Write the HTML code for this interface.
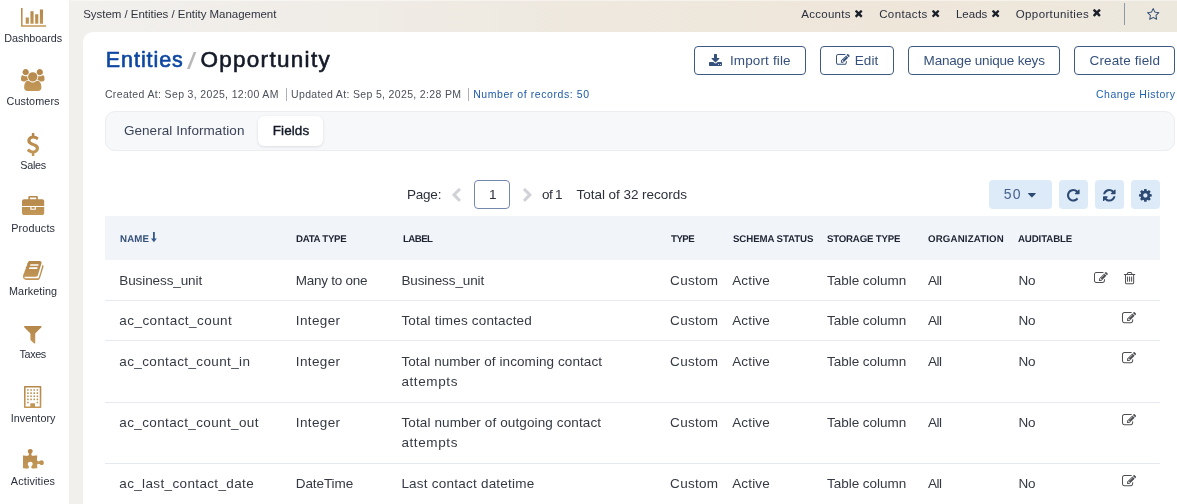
<!DOCTYPE html>
<html lang="en"><head><meta charset="utf-8"><title>Entities / Opportunity</title>
<style>
*{box-sizing:border-box;margin:0;padding:0}
html,body{width:1177px;height:504px;overflow:hidden;background:#f2f0ed}
#root{position:absolute;left:0;top:0;width:1177px;height:504px;overflow:hidden;will-change:transform;font-family:"Liberation Sans",sans-serif;color:#2a2f3d;
 background:linear-gradient(90deg,#f2f0ed 0px,#f2f0ed 83px,#f0ede8 300px,#eee8de 600px,#efe6da 900px,#ece8de 1177px)}
.t{position:absolute;white-space:nowrap;display:block}
.ic{position:absolute;display:block;overflow:visible}
#sidebar{position:absolute;left:0;top:0;width:69px;height:504px;background:#fff}
#card{position:absolute;left:83px;top:32px;width:1110px;height:500px;background:#fff;border-radius:10px 0 0 0}
#tdiv{position:absolute;left:1124px;top:3px;width:1px;height:22px;background:#8d97ab}
.btn{position:absolute;top:46px;height:29px;border:1px solid #3f5982;border-radius:4px;background:#fff}
.sep{position:absolute;top:88px;width:1px;height:13px;background:#adb1b8}
#hl{position:absolute;left:71px;top:0;width:1106px;height:1px;background:rgba(255,255,255,.45)}
#tabs{position:absolute;left:105px;top:111px;width:1070px;height:40px;background:#f7f8fa;border:1px solid #ebedf1;border-radius:10px}
#pill{position:absolute;left:258px;top:116px;width:65px;height:29.5px;background:#fff;border-radius:6px;box-shadow:0 1px 3px rgba(20,30,60,.12)}
#pbox{position:absolute;left:474px;top:180px;width:36px;height:28.5px;border:1px solid #7687ae;border-radius:4px;background:#fff}
.tb{position:absolute;top:180px;height:29px;background:#ddeaf8;border-radius:4px}
#thead{position:absolute;left:105px;top:216px;width:1055px;height:44px;background:#f1f4f9}
.ln{position:absolute;left:105px;width:1055px;height:1px;background:#e7e9f1}
</style></head><body>
<div id="root">
<svg width="0" height="0" style="position:absolute"><defs><linearGradient id="gold" x1="0" y1="0" x2="0" y2="1"><stop offset="0" stop-color="#c39857"/><stop offset="1" stop-color="#b4864a"/></linearGradient></defs></svg>
<nav id="nav">
<div id="sidebar"></div>
<span class="t" id="sl0" style="left:4.31px;top:31.00px;font-size:10.8px;line-height:14px;color:#2a2f3d;letter-spacing:-0.039px;">Dashboards</span>
<span class="t" id="sl1" style="left:6.51px;top:94.00px;font-size:10.8px;line-height:14px;color:#2a2f3d;letter-spacing:0.096px;">Customers</span>
<span class="t" id="sl2" style="left:20.26px;top:158.00px;font-size:10.8px;line-height:14px;color:#2a2f3d;letter-spacing:-0.261px;">Sales</span>
<span class="t" id="sl3" style="left:11.26px;top:221.00px;font-size:10.8px;line-height:14px;color:#2a2f3d;letter-spacing:0.159px;">Products</span>
<span class="t" id="sl4" style="left:9.01px;top:284.00px;font-size:10.8px;line-height:14px;color:#2a2f3d;letter-spacing:0.071px;">Marketing</span>
<span class="t" id="sl5" style="left:19.51px;top:347.00px;font-size:10.8px;line-height:14px;color:#2a2f3d;letter-spacing:-0.374px;">Taxes</span>
<span class="t" id="sl6" style="left:10.76px;top:411.00px;font-size:10.8px;line-height:14px;color:#2a2f3d;letter-spacing:0.038px;">Inventory</span>
<span class="t" id="sl7" style="left:10.76px;top:474.00px;font-size:10.8px;line-height:14px;color:#2a2f3d;letter-spacing:0.179px;">Activities</span>
<svg class="ic" style="left:20.92px;top:7.61px" width="25.17" height="18.88" viewBox="0.0 -1408.0 2048.0 1536.0"><path fill="url(#gold)" transform="scale(1,-1)" d="M640 640v-512h-256v512h256zM1024 1152v-1024h-256v1024h256zM2048 0v-128h-2048v1536h128v-1408h1920zM1408 896v-768h-256v768h256zM1792 1280v-1152h-256v1152h256z"/></svg>
<svg class="ic" style="left:21.36px;top:68.65px" width="23.53" height="21.96" viewBox="0.0 -1536.0 1920.0 1792.0"><path fill="url(#gold)" transform="scale(1,-1)" d="M593 640q-162 -5 -265 -128h-134q-82 0 -138 40.5t-56 118.5q0 353 124 353q6 0 43.5 -21t97.5 -42.5t119 -21.5q67 0 133 23q-5 -37 -5 -66q0 -139 81 -256zM1664 3q0 -120 -73 -189.5t-194 -69.5h-874q-121 0 -194 69.5t-73 189.5q0 53 3.5 103.5t14 109t26.5 108.5 t43 97.5t62 81t85.5 53.5t111.5 20q10 0 43 -21.5t73 -48t107 -48t135 -21.5t135 21.5t107 48t73 48t43 21.5q61 0 111.5 -20t85.5 -53.5t62 -81t43 -97.5t26.5 -108.5t14 -109t3.5 -103.5zM640 1280q0 -106 -75 -181t-181 -75t-181 75t-75 181t75 181t181 75t181 -75 t75 -181zM1344 896q0 -159 -112.5 -271.5t-271.5 -112.5t-271.5 112.5t-112.5 271.5t112.5 271.5t271.5 112.5t271.5 -112.5t112.5 -271.5zM1920 671q0 -78 -56 -118.5t-138 -40.5h-134q-103 123 -265 128q81 117 81 256q0 29 -5 66q66 -23 133 -23q59 0 119 21.5t97.5 42.5 t43.5 21q124 0 124 -353zM1792 1280q0 -106 -75 -181t-181 -75t-181 75t-75 181t75 181t181 75t181 -75t75 -181z"/></svg>
<svg class="ic" style="left:27.26px;top:133.00px" width="11.98" height="23.00" viewBox="45.0 -1536.0 933.0 1792.0"><path fill="url(#gold)" transform="scale(1,-1)" d="M978 351q0 -153 -99.5 -263.5t-258.5 -136.5v-175q0 -14 -9 -23t-23 -9h-135q-13 0 -22.5 9.5t-9.5 22.5v175q-66 9 -127.5 31t-101.5 44.5t-74 48t-46.5 37.5t-17.5 18q-17 21 -2 41l103 135q7 10 23 12q15 2 24 -9l2 -2q113 -99 243 -125q37 -8 74 -8q81 0 142.5 43 t61.5 122q0 28 -15 53t-33.5 42t-58.5 37.5t-66 32t-80 32.5q-39 16 -61.5 25t-61.5 26.5t-62.5 31t-56.5 35.5t-53.5 42.5t-43.5 49t-35.5 58t-21 66.5t-8.5 78q0 138 98 242t255 134v180q0 13 9.5 22.5t22.5 9.5h135q14 0 23 -9t9 -23v-176q57 -6 110.5 -23t87 -33.5 t63.5 -37.5t39 -29t15 -14q17 -18 5 -38l-81 -146q-8 -15 -23 -16q-14 -3 -27 7q-3 3 -14.5 12t-39 26.5t-58.5 32t-74.5 26t-85.5 11.5q-95 0 -155 -43t-60 -111q0 -26 8.5 -48t29.5 -41.5t39.5 -33t56 -31t60.5 -27t70 -27.5q53 -20 81 -31.5t76 -35t75.5 -42.5t62 -50 t53 -63.5t31.5 -76.5t13 -94z"/></svg>
<svg class="ic" style="left:22.16px;top:195.87px" width="22.19" height="19.02" viewBox="0.0 -1536.0 1792.0 1536.0"><path fill="url(#gold)" transform="scale(1,-1)" d="M640 1280h512v128h-512v-128zM1792 640v-480q0 -66 -47 -113t-113 -47h-1472q-66 0 -113 47t-47 113v480h672v-160q0 -26 19 -45t45 -19h320q26 0 45 19t19 45v160h672zM1024 640v-128h-256v128h256zM1792 1120v-384h-1792v384q0 66 47 113t113 47h352v160q0 40 28 68 t68 28h576q40 0 68 -28t28 -68v-160h352q66 0 113 -47t47 -113z"/></svg>
<svg class="ic" style="left:23.11px;top:260.65px" width="20.54" height="18.94" viewBox="-0.5 -1408.0 1665.3 1536.0"><path fill="url(#gold)" transform="scale(1,-1)" d="M1639 1058q40 -57 18 -129l-275 -906q-19 -64 -76.5 -107.5t-122.5 -43.5h-923q-77 0 -148.5 53.5t-99.5 131.5q-24 67 -2 127q0 4 3 27t4 37q1 8 -3 21.5t-3 19.5q2 11 8 21t16.5 23.5t16.5 23.5q23 38 45 91.5t30 91.5q3 10 0.5 30t-0.5 28q3 11 17 28t17 23 q21 36 42 92t25 90q1 9 -2.5 32t0.5 28q4 13 22 30.5t22 22.5q19 26 42.5 84.5t27.5 96.5q1 8 -3 25.5t-2 26.5q2 8 9 18t18 23t17 21q8 12 16.5 30.5t15 35t16 36t19.5 32t26.5 23.5t36 11.5t47.5 -5.5l-1 -3q38 9 51 9h761q74 0 114 -56t18 -130l-274 -906 q-36 -119 -71.5 -153.5t-128.5 -34.5h-869q-27 0 -38 -15q-11 -16 -1 -43q24 -70 144 -70h923q29 0 56 15.5t35 41.5l300 987q7 22 5 57q38 -15 59 -43zM575 1056q-4 -13 2 -22.5t20 -9.5h608q13 0 25.5 9.5t16.5 22.5l21 64q4 13 -2 22.5t-20 9.5h-608q-13 0 -25.5 -9.5 t-16.5 -22.5zM492 800q-4 -13 2 -22.5t20 -9.5h608q13 0 25.5 9.5t16.5 22.5l21 64q4 13 -2 22.5t-20 9.5h-608q-13 0 -25.5 -9.5t-16.5 -22.5z"/></svg>
<svg class="ic" style="left:24.31px;top:325.69px" width="17.64" height="17.61" viewBox="-1.0 -1280.0 1410.0 1408.0"><path fill="url(#gold)" transform="scale(1,-1)" d="M1403 1241q17 -41 -14 -70l-493 -493v-742q0 -42 -39 -59q-13 -5 -25 -5q-27 0 -45 19l-256 256q-19 19 -19 45v486l-493 493q-31 29 -14 70q17 39 59 39h1280q42 0 59 -39z"/></svg>
<svg class="ic" style="left:24.46px;top:385.73px" width="17.32" height="22.05" viewBox="0.0 -1536.0 1408.0 1792.0"><path fill="url(#gold)" transform="scale(1,-1)" d="M384 224v-64q0 -13 -9.5 -22.5t-22.5 -9.5h-64q-13 0 -22.5 9.5t-9.5 22.5v64q0 13 9.5 22.5t22.5 9.5h64q13 0 22.5 -9.5t9.5 -22.5zM384 480v-64q0 -13 -9.5 -22.5t-22.5 -9.5h-64q-13 0 -22.5 9.5t-9.5 22.5v64q0 13 9.5 22.5t22.5 9.5h64q13 0 22.5 -9.5t9.5 -22.5z M640 480v-64q0 -13 -9.5 -22.5t-22.5 -9.5h-64q-13 0 -22.5 9.5t-9.5 22.5v64q0 13 9.5 22.5t22.5 9.5h64q13 0 22.5 -9.5t9.5 -22.5zM384 736v-64q0 -13 -9.5 -22.5t-22.5 -9.5h-64q-13 0 -22.5 9.5t-9.5 22.5v64q0 13 9.5 22.5t22.5 9.5h64q13 0 22.5 -9.5t9.5 -22.5z M1152 224v-64q0 -13 -9.5 -22.5t-22.5 -9.5h-64q-13 0 -22.5 9.5t-9.5 22.5v64q0 13 9.5 22.5t22.5 9.5h64q13 0 22.5 -9.5t9.5 -22.5zM896 480v-64q0 -13 -9.5 -22.5t-22.5 -9.5h-64q-13 0 -22.5 9.5t-9.5 22.5v64q0 13 9.5 22.5t22.5 9.5h64q13 0 22.5 -9.5t9.5 -22.5z M640 736v-64q0 -13 -9.5 -22.5t-22.5 -9.5h-64q-13 0 -22.5 9.5t-9.5 22.5v64q0 13 9.5 22.5t22.5 9.5h64q13 0 22.5 -9.5t9.5 -22.5zM384 992v-64q0 -13 -9.5 -22.5t-22.5 -9.5h-64q-13 0 -22.5 9.5t-9.5 22.5v64q0 13 9.5 22.5t22.5 9.5h64q13 0 22.5 -9.5t9.5 -22.5z M1152 480v-64q0 -13 -9.5 -22.5t-22.5 -9.5h-64q-13 0 -22.5 9.5t-9.5 22.5v64q0 13 9.5 22.5t22.5 9.5h64q13 0 22.5 -9.5t9.5 -22.5zM896 736v-64q0 -13 -9.5 -22.5t-22.5 -9.5h-64q-13 0 -22.5 9.5t-9.5 22.5v64q0 13 9.5 22.5t22.5 9.5h64q13 0 22.5 -9.5t9.5 -22.5z M640 992v-64q0 -13 -9.5 -22.5t-22.5 -9.5h-64q-13 0 -22.5 9.5t-9.5 22.5v64q0 13 9.5 22.5t22.5 9.5h64q13 0 22.5 -9.5t9.5 -22.5zM384 1248v-64q0 -13 -9.5 -22.5t-22.5 -9.5h-64q-13 0 -22.5 9.5t-9.5 22.5v64q0 13 9.5 22.5t22.5 9.5h64q13 0 22.5 -9.5t9.5 -22.5z M1152 736v-64q0 -13 -9.5 -22.5t-22.5 -9.5h-64q-13 0 -22.5 9.5t-9.5 22.5v64q0 13 9.5 22.5t22.5 9.5h64q13 0 22.5 -9.5t9.5 -22.5zM896 992v-64q0 -13 -9.5 -22.5t-22.5 -9.5h-64q-13 0 -22.5 9.5t-9.5 22.5v64q0 13 9.5 22.5t22.5 9.5h64q13 0 22.5 -9.5t9.5 -22.5z M640 1248v-64q0 -13 -9.5 -22.5t-22.5 -9.5h-64q-13 0 -22.5 9.5t-9.5 22.5v64q0 13 9.5 22.5t22.5 9.5h64q13 0 22.5 -9.5t9.5 -22.5zM1152 992v-64q0 -13 -9.5 -22.5t-22.5 -9.5h-64q-13 0 -22.5 9.5t-9.5 22.5v64q0 13 9.5 22.5t22.5 9.5h64q13 0 22.5 -9.5t9.5 -22.5z M896 1248v-64q0 -13 -9.5 -22.5t-22.5 -9.5h-64q-13 0 -22.5 9.5t-9.5 22.5v64q0 13 9.5 22.5t22.5 9.5h64q13 0 22.5 -9.5t9.5 -22.5zM1152 1248v-64q0 -13 -9.5 -22.5t-22.5 -9.5h-64q-13 0 -22.5 9.5t-9.5 22.5v64q0 13 9.5 22.5t22.5 9.5h64q13 0 22.5 -9.5t9.5 -22.5z M896 -128h384v1536h-1152v-1536h384v224q0 13 9.5 22.5t22.5 9.5h320q13 0 22.5 -9.5t9.5 -22.5v-224zM1408 1472v-1664q0 -26 -19 -45t-45 -19h-1280q-26 0 -45 19t-19 45v1664q0 26 19 45t45 19h1280q26 0 45 -19t19 -45z"/></svg>
<svg class="ic" style="left:22.72px;top:449.04px" width="20.81" height="19.66" viewBox="0.0 -1536.0 1664.0 1572.0"><path fill="url(#gold)" transform="scale(1,-1)" d="M1664 438q0 -81 -44.5 -135t-123.5 -54q-41 0 -77.5 17.5t-59 38t-56.5 38t-71 17.5q-110 0 -110 -124q0 -39 16 -115t15 -115v-5q-22 0 -33 -1q-34 -3 -97.5 -11.5t-115.5 -13.5t-98 -5q-61 0 -103 26.5t-42 83.5q0 37 17.5 71t38 56.5t38 59t17.5 77.5q0 79 -54 123.5 t-135 44.5q-84 0 -143 -45.5t-59 -127.5q0 -43 15 -83t33.5 -64.5t33.5 -53t15 -50.5q0 -45 -46 -89q-37 -35 -117 -35q-95 0 -245 24q-9 2 -27.5 4t-27.5 4l-13 2q-1 0 -3 1q-2 0 -2 1v1024q2 -1 17.5 -3.5t34 -5t21.5 -3.5q150 -24 245 -24q80 0 117 35q46 44 46 89 q0 22 -15 50.5t-33.5 53t-33.5 64.5t-15 83q0 82 59 127.5t144 45.5q80 0 134 -44.5t54 -123.5q0 -41 -17.5 -77.5t-38 -59t-38 -56.5t-17.5 -71q0 -57 42 -83.5t103 -26.5q64 0 180 15t163 17v-2q-1 -2 -3.5 -17.5t-5 -34t-3.5 -21.5q-24 -150 -24 -245q0 -80 35 -117 q44 -46 89 -46q22 0 50.5 15t53 33.5t64.5 33.5t83 15q82 0 127.5 -59t45.5 -143z"/></svg>
</nav>
<header id="topbar">
<div id="hl"></div>
<span class="t" id="crumb" style="left:83.18px;top:7.00px;font-size:11.5px;line-height:15px;color:#30343f;letter-spacing:-0.030px;">System / Entities / Entity Management</span>
<span class="t" id="tt0" style="left:801.28px;top:7.00px;font-size:11.5px;line-height:15px;color:#2a2f3d;letter-spacing:0.275px;">Accounts</span>
<span class="t" id="tt1" style="left:879.18px;top:7.00px;font-size:11.5px;line-height:15px;color:#2a2f3d;letter-spacing:0.378px;">Contacts</span>
<span class="t" id="tt2" style="left:955.98px;top:7.00px;font-size:11.5px;line-height:15px;color:#2a2f3d;letter-spacing:-0.002px;">Leads</span>
<span class="t" id="tt3" style="left:1015.78px;top:7.00px;font-size:11.5px;line-height:15px;color:#2a2f3d;letter-spacing:0.377px;">Opportunities</span>
<svg class="ic" style="left:855.25px;top:9.55px" width="7.40" height="7.40" viewBox="110.0 -1170.0 1188.0 1188.0"><path fill="#1b1f2a" transform="scale(1,-1)" d="M1298 214q0 -40 -28 -68l-136 -136q-28 -28 -68 -28t-68 28l-294 294l-294 -294q-28 -28 -68 -28t-68 28l-136 136q-28 28 -28 68t28 68l294 294l-294 294q-28 28 -28 68t28 68l136 136q28 28 68 28t68 -28l294 -294l294 294q28 28 68 28t68 -28l136 -136q28 -28 28 -68 t-28 -68l-294 -294l294 -294q28 -28 28 -68z"/></svg>
<svg class="ic" style="left:932.10px;top:9.60px" width="7.30" height="7.30" viewBox="110.0 -1170.0 1188.0 1188.0"><path fill="#1b1f2a" transform="scale(1,-1)" d="M1298 214q0 -40 -28 -68l-136 -136q-28 -28 -68 -28t-68 28l-294 294l-294 -294q-28 -28 -68 -28t-68 28l-136 136q-28 28 -28 68t28 68l294 294l-294 294q-28 28 -28 68t28 68l136 136q28 28 68 28t68 -28l294 -294l294 294q28 28 68 28t68 -28l136 -136q28 -28 28 -68 t-28 -68l-294 -294l294 -294q28 -28 28 -68z"/></svg>
<svg class="ic" style="left:991.90px;top:9.60px" width="7.30" height="7.30" viewBox="110.0 -1170.0 1188.0 1188.0"><path fill="#1b1f2a" transform="scale(1,-1)" d="M1298 214q0 -40 -28 -68l-136 -136q-28 -28 -68 -28t-68 28l-294 294l-294 -294q-28 -28 -68 -28t-68 28l-136 136q-28 28 -28 68t28 68l294 294l-294 294q-28 28 -28 68t28 68l136 136q28 28 68 28t68 -28l294 -294l294 294q28 28 68 28t68 -28l136 -136q28 -28 28 -68 t-28 -68l-294 -294l294 -294q28 -28 28 -68z"/></svg>
<svg class="ic" style="left:1092.95px;top:9.45px" width="7.60" height="7.60" viewBox="110.0 -1170.0 1188.0 1188.0"><path fill="#1b1f2a" transform="scale(1,-1)" d="M1298 214q0 -40 -28 -68l-136 -136q-28 -28 -68 -28t-68 28l-294 294l-294 -294q-28 -28 -68 -28t-68 28l-136 136q-28 28 -28 68t28 68l294 294l-294 294q-28 28 -28 68t28 68l136 136q28 28 68 28t68 -28l294 -294l294 294q28 28 68 28t68 -28l136 -136q28 -28 28 -68 t-28 -68l-294 -294l294 -294q28 -28 28 -68z"/></svg>
<svg class="ic" style="left:1146.81px;top:7.59px" width="12.39" height="11.81" viewBox="0.0 -1504.0 1664.0 1587.0"><path fill="#2d4a73" transform="scale(1,-1)" d="M1137 532l306 297l-422 62l-189 382l-189 -382l-422 -62l306 -297l-73 -421l378 199l377 -199zM1664 889q0 -22 -26 -48l-363 -354l86 -500q1 -7 1 -20q0 -50 -41 -50q-19 0 -40 12l-449 236l-449 -236q-22 -12 -40 -12q-21 0 -31.5 14.5t-10.5 35.5q0 6 2 20l86 500 l-364 354q-25 27 -25 48q0 37 56 46l502 73l225 455q19 41 49 41t49 -41l225 -455l502 -73q56 -9 56 -46z"/></svg>
<div id="tdiv"></div>
</header>
<main id="main">
<div id="card"></div>
<div class="btn" style="left:694px;width:112px"></div>
<div class="btn" style="left:820px;width:74px"></div>
<div class="btn" style="left:908px;width:152px"></div>
<div class="btn" style="left:1074px;width:101px"></div>
<div class="sep" style="left:286px"></div>
<div class="sep" style="left:468px"></div>
<div id="tabs"></div>
<div id="pill"></div>
<div id="pbox"></div>
<div class="tb" style="left:989px;width:63px"></div>
<div class="tb" style="left:1059px;width:29px"></div>
<div class="tb" style="left:1095px;width:29px"></div>
<div class="tb" style="left:1131px;width:29px"></div>
<div id="thead"></div>
<div class="ln" style="top:300px"></div>
<div class="ln" style="top:340px"></div>
<div class="ln" style="top:402px"></div>
<div class="ln" style="top:463px"></div>
<span class="t" id="ti1" style="left:105.83px;top:46.00px;font-size:21.5px;line-height:28px;color:#0d47a1;letter-spacing:0.931px;-webkit-text-stroke:0.6px #0d47a1">Entities</span>
<span class="t" id="ti2" style="left:187.42px;top:45.00px;font-size:24px;line-height:31px;color:#b8b8b8;letter-spacing:0.000px;transform:scaleX(1.4);transform-origin:0 0">/</span>
<span class="t" id="ti3" style="left:200.39px;top:45.00px;font-size:22.5px;line-height:29px;color:#141a28;letter-spacing:1.301px;-webkit-text-stroke:0.6px #141a28">Opportunity</span>
<span class="t" id="b1" style="left:729.89px;top:52.00px;font-size:13.5px;line-height:18px;color:#35517b;letter-spacing:0.143px;">Import file</span>
<span class="t" id="b2" style="left:854.79px;top:52.00px;font-size:13.5px;line-height:18px;color:#35517b;letter-spacing:0.083px;">Edit</span>
<span class="t" id="b3" style="left:923.59px;top:52.00px;font-size:13.5px;line-height:18px;color:#35517b;letter-spacing:-0.193px;">Manage unique keys</span>
<span class="t" id="b4" style="left:1089.59px;top:52.00px;font-size:13.5px;line-height:18px;color:#35517b;letter-spacing:0.124px;">Create field</span>
<span class="t" id="m1" style="left:104.93px;top:87.00px;font-size:10.5px;line-height:14px;color:#4b505b;letter-spacing:0.352px;">Created At: Sep 3, 2025, 12:00 AM</span>
<span class="t" id="m2" style="left:291.03px;top:87.00px;font-size:10.5px;line-height:14px;color:#4b505b;letter-spacing:0.344px;">Updated At: Sep 5, 2025, 2:28 PM</span>
<span class="t" id="m3" style="left:473.13px;top:87.00px;font-size:10.5px;line-height:14px;color:#1f5aa8;letter-spacing:0.569px;">Number of records: 50</span>
<span class="t" id="m4" style="left:1096.03px;top:87.00px;font-size:10.5px;line-height:14px;color:#2563b0;letter-spacing:0.513px;">Change History</span>
<span class="t" id="tab1" style="left:123.89px;top:122.00px;font-size:13.5px;line-height:18px;color:#3a4357;letter-spacing:0.067px;">General Information</span>
<span class="t" id="tab2" style="left:272.69px;top:122.00px;font-size:13.5px;line-height:18px;color:#141a28;letter-spacing:0.100px;-webkit-text-stroke:0.4px #141a28">Fields</span>
<span class="t" id="p1" style="left:406.99px;top:186.00px;font-size:13.5px;line-height:18px;color:#2b303c;letter-spacing:-0.217px;">Page:</span>
<span class="t" id="p2" style="left:489.09px;top:186.00px;font-size:13.5px;line-height:18px;color:#2b303c;letter-spacing:0.000px;">1</span>
<span class="t" id="p3" style="left:542.09px;top:186.00px;font-size:13.5px;line-height:18px;color:#2b303c;letter-spacing:-0.705px;">of 1</span>
<span class="t" id="p4" style="left:576.59px;top:186.00px;font-size:13.5px;line-height:18px;color:#2b303c;letter-spacing:-0.042px;">Total of 32 records</span>
<span class="t" id="p5" style="left:1003.77px;top:185.00px;font-size:14px;line-height:18px;color:#46618c;letter-spacing:1.282px;">50</span>
<span class="t" id="h0" style="left:119.76px;top:232.00px;font-size:9.7px;line-height:13px;color:#35517b;font-weight:bold;letter-spacing:0.145px;transform:rotate(0.03deg);transform-origin:0 9.3px">NAME</span>
<span class="t" id="h1" style="left:296.16px;top:232.00px;font-size:9.7px;line-height:13px;color:#1f2433;font-weight:bold;letter-spacing:-0.293px;transform:rotate(0.03deg);transform-origin:0 9.3px">DATA TYPE</span>
<span class="t" id="h2" style="left:402.66px;top:232.00px;font-size:9.7px;line-height:13px;color:#1f2433;font-weight:bold;letter-spacing:-0.583px;transform:rotate(0.03deg);transform-origin:0 9.3px">LABEL</span>
<span class="t" id="h3" style="left:670.56px;top:232.00px;font-size:9.7px;line-height:13px;color:#1f2433;font-weight:bold;letter-spacing:-0.515px;transform:rotate(0.03deg);transform-origin:0 9.3px">TYPE</span>
<span class="t" id="h4" style="left:732.66px;top:232.00px;font-size:9.7px;line-height:13px;color:#1f2433;font-weight:bold;letter-spacing:-0.105px;transform:rotate(0.03deg);transform-origin:0 9.3px">SCHEMA STATUS</span>
<span class="t" id="h5" style="left:827.46px;top:232.00px;font-size:9.7px;line-height:13px;color:#1f2433;font-weight:bold;letter-spacing:-0.215px;transform:rotate(0.03deg);transform-origin:0 9.3px">STORAGE TYPE</span>
<span class="t" id="h6" style="left:928.46px;top:232.00px;font-size:9.7px;line-height:13px;color:#1f2433;font-weight:bold;letter-spacing:0.152px;transform:rotate(0.03deg);transform-origin:0 9.3px">ORGANIZATION</span>
<span class="t" id="h7" style="left:1018.06px;top:232.00px;font-size:9.7px;line-height:13px;color:#1f2433;font-weight:bold;letter-spacing:-0.123px;transform:rotate(0.03deg);transform-origin:0 9.3px">AUDITABLE</span>
<span class="t" id="r0n" style="left:119.29px;top:272.00px;font-size:13.5px;line-height:18px;color:#343944;letter-spacing:-0.096px;">Business_unit</span>
<span class="t" id="r0d" style="left:295.79px;top:272.00px;font-size:13.5px;line-height:18px;color:#343944;letter-spacing:-0.248px;">Many to one</span>
<span class="t" id="r0l0" style="left:401.39px;top:272.00px;font-size:13.5px;line-height:18px;color:#343944;letter-spacing:-0.096px;">Business_unit</span>
<span class="t" id="r0t" style="left:670.09px;top:272.00px;font-size:13.5px;line-height:18px;color:#343944;letter-spacing:0.300px;">Custom</span>
<span class="t" id="r0s" style="left:732.19px;top:272.00px;font-size:13.5px;line-height:18px;color:#343944;letter-spacing:0.170px;">Active</span>
<span class="t" id="r0g" style="left:826.99px;top:272.00px;font-size:13.5px;line-height:18px;color:#343944;letter-spacing:-0.030px;">Table column</span>
<span class="t" id="r0o" style="left:927.99px;top:272.00px;font-size:13.5px;line-height:18px;color:#343944;letter-spacing:-0.500px;">All</span>
<span class="t" id="r0a" style="left:1018.59px;top:272.00px;font-size:13.5px;line-height:18px;color:#343944;letter-spacing:-0.251px;">No</span>
<span class="t" id="r1n" style="left:119.29px;top:312.00px;font-size:13.5px;line-height:18px;color:#343944;letter-spacing:0.446px;">ac_contact_count</span>
<span class="t" id="r1d" style="left:295.79px;top:312.00px;font-size:13.5px;line-height:18px;color:#343944;letter-spacing:0.364px;">Integer</span>
<span class="t" id="r1l0" style="left:401.39px;top:312.00px;font-size:13.5px;line-height:18px;color:#343944;letter-spacing:0.179px;">Total times contacted</span>
<span class="t" id="r1t" style="left:670.09px;top:312.00px;font-size:13.5px;line-height:18px;color:#343944;letter-spacing:0.300px;">Custom</span>
<span class="t" id="r1s" style="left:732.19px;top:312.00px;font-size:13.5px;line-height:18px;color:#343944;letter-spacing:0.170px;">Active</span>
<span class="t" id="r1g" style="left:826.99px;top:312.00px;font-size:13.5px;line-height:18px;color:#343944;letter-spacing:-0.030px;">Table column</span>
<span class="t" id="r1o" style="left:927.99px;top:312.00px;font-size:13.5px;line-height:18px;color:#343944;letter-spacing:-0.500px;">All</span>
<span class="t" id="r1a" style="left:1018.59px;top:312.00px;font-size:13.5px;line-height:18px;color:#343944;letter-spacing:-0.251px;">No</span>
<span class="t" id="r2n" style="left:119.29px;top:353.00px;font-size:13.5px;line-height:18px;color:#343944;letter-spacing:0.382px;">ac_contact_count_in</span>
<span class="t" id="r2d" style="left:295.79px;top:353.00px;font-size:13.5px;line-height:18px;color:#343944;letter-spacing:0.364px;">Integer</span>
<span class="t" id="r2l0" style="left:401.39px;top:353.00px;font-size:13.5px;line-height:18px;color:#343944;letter-spacing:0.081px;">Total number of incoming contact</span>
<span class="t" id="r2l1" style="left:401.39px;top:373.00px;font-size:13.5px;line-height:18px;color:#343944;letter-spacing:0.619px;">attempts</span>
<span class="t" id="r2t" style="left:670.09px;top:353.00px;font-size:13.5px;line-height:18px;color:#343944;letter-spacing:0.300px;">Custom</span>
<span class="t" id="r2s" style="left:732.19px;top:353.00px;font-size:13.5px;line-height:18px;color:#343944;letter-spacing:0.170px;">Active</span>
<span class="t" id="r2g" style="left:826.99px;top:353.00px;font-size:13.5px;line-height:18px;color:#343944;letter-spacing:-0.030px;">Table column</span>
<span class="t" id="r2o" style="left:927.99px;top:353.00px;font-size:13.5px;line-height:18px;color:#343944;letter-spacing:-0.500px;">All</span>
<span class="t" id="r2a" style="left:1018.59px;top:353.00px;font-size:13.5px;line-height:18px;color:#343944;letter-spacing:-0.251px;">No</span>
<span class="t" id="r3n" style="left:119.29px;top:414.00px;font-size:13.5px;line-height:18px;color:#343944;letter-spacing:0.374px;">ac_contact_count_out</span>
<span class="t" id="r3d" style="left:295.79px;top:414.00px;font-size:13.5px;line-height:18px;color:#343944;letter-spacing:0.364px;">Integer</span>
<span class="t" id="r3l0" style="left:401.39px;top:414.00px;font-size:13.5px;line-height:18px;color:#343944;letter-spacing:0.123px;">Total number of outgoing contact</span>
<span class="t" id="r3l1" style="left:401.39px;top:434.00px;font-size:13.5px;line-height:18px;color:#343944;letter-spacing:0.619px;">attempts</span>
<span class="t" id="r3t" style="left:670.09px;top:414.00px;font-size:13.5px;line-height:18px;color:#343944;letter-spacing:0.300px;">Custom</span>
<span class="t" id="r3s" style="left:732.19px;top:414.00px;font-size:13.5px;line-height:18px;color:#343944;letter-spacing:0.170px;">Active</span>
<span class="t" id="r3g" style="left:826.99px;top:414.00px;font-size:13.5px;line-height:18px;color:#343944;letter-spacing:-0.030px;">Table column</span>
<span class="t" id="r3o" style="left:927.99px;top:414.00px;font-size:13.5px;line-height:18px;color:#343944;letter-spacing:-0.500px;">All</span>
<span class="t" id="r3a" style="left:1018.59px;top:414.00px;font-size:13.5px;line-height:18px;color:#343944;letter-spacing:-0.251px;">No</span>
<span class="t" id="r4n" style="left:119.29px;top:475.00px;font-size:13.5px;line-height:18px;color:#343944;letter-spacing:0.359px;">ac_last_contact_date</span>
<span class="t" id="r4d" style="left:295.79px;top:475.00px;font-size:13.5px;line-height:18px;color:#343944;letter-spacing:-0.086px;">DateTime</span>
<span class="t" id="r4l0" style="left:401.39px;top:475.00px;font-size:13.5px;line-height:18px;color:#343944;letter-spacing:0.229px;">Last contact datetime</span>
<span class="t" id="r4t" style="left:670.09px;top:475.00px;font-size:13.5px;line-height:18px;color:#343944;letter-spacing:0.300px;">Custom</span>
<span class="t" id="r4s" style="left:732.19px;top:475.00px;font-size:13.5px;line-height:18px;color:#343944;letter-spacing:0.170px;">Active</span>
<span class="t" id="r4g" style="left:826.99px;top:475.00px;font-size:13.5px;line-height:18px;color:#343944;letter-spacing:-0.030px;">Table column</span>
<span class="t" id="r4o" style="left:927.99px;top:475.00px;font-size:13.5px;line-height:18px;color:#343944;letter-spacing:-0.500px;">All</span>
<span class="t" id="r4a" style="left:1018.59px;top:475.00px;font-size:13.5px;line-height:18px;color:#343944;letter-spacing:-0.251px;">No</span>
<svg class="ic" style="left:709.21px;top:54.11px" width="12.98" height="11.98" viewBox="0.0 -1536.0 1664.0 1536.0"><path fill="#35517b" transform="scale(1,-1)" d="M1280 192q0 26 -19 45t-45 19t-45 -19t-19 -45t19 -45t45 -19t45 19t19 45zM1536 192q0 26 -19 45t-45 19t-45 -19t-19 -45t19 -45t45 -19t45 19t19 45zM1664 416v-320q0 -40 -28 -68t-68 -28h-1472q-40 0 -68 28t-28 68v320q0 40 28 68t68 28h465l135 -136 q58 -56 136 -56t136 56l136 136h464q40 0 68 -28t28 -68zM1339 985q17 -41 -14 -70l-448 -448q-18 -19 -45 -19t-45 19l-448 448q-31 29 -14 70q17 39 59 39h256v448q0 26 19 45t45 19h256q26 0 45 -19t19 -45v-448h256q42 0 59 -39z"/></svg>
<svg class="ic" style="left:836.01px;top:54.05px" width="13.68" height="10.79" viewBox="0.0 -1408.0 1784.0 1408.0"><path fill="#35517b" transform="scale(1,-1)" d="M888 352l116 116l-152 152l-116 -116v-56h96v-96h56zM1328 1072q-16 16 -33 -1l-350 -350q-17 -17 -1 -33t33 1l350 350q17 17 1 33zM1408 478v-190q0 -119 -84.5 -203.5t-203.5 -84.5h-832q-119 0 -203.5 84.5t-84.5 203.5v832q0 119 84.5 203.5t203.5 84.5h832 q63 0 117 -25q15 -7 18 -23q3 -17 -9 -29l-49 -49q-14 -14 -32 -8q-23 6 -45 6h-832q-66 0 -113 -47t-47 -113v-832q0 -66 47 -113t113 -47h832q66 0 113 47t47 113v126q0 13 9 22l64 64q15 15 35 7t20 -29zM1312 1216l288 -288l-672 -672h-288v288zM1756 1084l-92 -92 l-288 288l92 92q28 28 68 28t68 -28l152 -152q28 -28 28 -68t-28 -68z"/></svg>
<svg class="ic" style="left:452.03px;top:188.08px" width="8.83" height="13.74" viewBox="154.0 -1510.0 1036.0 1612.0"><path fill="#d0d2d7" transform="scale(1,-1)" d="M1171 1235l-531 -531l531 -531q19 -19 19 -45t-19 -45l-166 -166q-19 -19 -45 -19t-45 19l-742 742q-19 19 -19 45t19 45l742 742q19 19 45 19t45 -19l166 -166q19 -19 19 -45t-19 -45z"/></svg>
<svg class="ic" style="left:523.43px;top:188.08px" width="8.83" height="13.74" viewBox="90.0 -1510.0 1036.0 1612.0"><path fill="#d0d2d7" transform="scale(1,-1)" d="M1107 659l-742 -742q-19 -19 -45 -19t-45 19l-166 166q-19 19 -19 45t19 45l531 531l-531 531q-19 19 -19 45t19 45l166 166q19 19 45 19t45 -19l742 -742q19 -19 19 -45t-19 -45z"/></svg>
<svg class="ic" style="left:1027.90px;top:192.56px" width="7.80" height="4.39" viewBox="0.0 -896.0 1024.0 576.0"><path fill="#2d4a73" transform="scale(1,-1)" d="M1024 832q0 -26 -19 -45l-448 -448q-19 -19 -45 -19t-45 19l-448 448q-19 19 -19 45t19 45t45 19h896q26 0 45 -19t19 -45z"/></svg>
<svg class="ic" style="left:1067.20px;top:188.70px" width="12.60" height="12.60" viewBox="0.0 -1408.0 1536.0 1536.0"><path fill="#2d4a73" transform="scale(1,-1)" d="M1536 1280v-448q0 -26 -19 -45t-45 -19h-448q-42 0 -59 40q-17 39 14 69l138 138q-148 137 -349 137q-104 0 -198.5 -40.5t-163.5 -109.5t-109.5 -163.5t-40.5 -198.5t40.5 -198.5t109.5 -163.5t163.5 -109.5t198.5 -40.5q119 0 225 52t179 147q7 10 23 12q15 0 25 -9 l137 -138q9 -8 9.5 -20.5t-7.5 -22.5q-109 -132 -264 -204.5t-327 -72.5q-156 0 -298 61t-245 164t-164 245t-61 298t61 298t164 245t245 164t298 61q147 0 284.5 -55.5t244.5 -156.5l130 129q29 31 70 14q39 -17 39 -59z"/></svg>
<svg class="ic" style="left:1103.20px;top:188.70px" width="12.60" height="12.60" viewBox="0.0 -1408.0 1536.0 1536.0"><path fill="#2d4a73" transform="scale(1,-1)" d="M1511 480q0 -5 -1 -7q-64 -268 -268 -434.5t-478 -166.5q-146 0 -282.5 55t-243.5 157l-129 -129q-19 -19 -45 -19t-45 19t-19 45v448q0 26 19 45t45 19h448q26 0 45 -19t19 -45t-19 -45l-137 -137q71 -66 161 -102t187 -36q134 0 250 65t186 179q11 17 53 117 q8 23 30 23h192q13 0 22.5 -9.5t9.5 -22.5zM1536 1280v-448q0 -26 -19 -45t-45 -19h-448q-26 0 -45 19t-19 45t19 45l138 138q-148 137 -349 137q-134 0 -250 -65t-186 -179q-11 -17 -53 -117q-8 -23 -30 -23h-199q-13 0 -22.5 9.5t-9.5 22.5v7q65 268 270 434.5t480 166.5 q146 0 284 -55.5t245 -156.5l130 129q19 19 45 19t45 -19t19 -45z"/></svg>
<svg class="ic" style="left:1139.03px;top:188.68px" width="12.75" height="12.75" viewBox="0.0 -1408.0 1536.0 1536.0"><path fill="#2d4a73" transform="scale(1,-1)" d="M1024 640q0 106 -75 181t-181 75t-181 -75t-75 -181t75 -181t181 -75t181 75t75 181zM1536 749v-222q0 -12 -8 -23t-20 -13l-185 -28q-19 -54 -39 -91q35 -50 107 -138q10 -12 10 -25t-9 -23q-27 -37 -99 -108t-94 -71q-12 0 -26 9l-138 108q-44 -23 -91 -38 q-16 -136 -29 -186q-7 -28 -36 -28h-222q-14 0 -24.5 8.5t-11.5 21.5l-28 184q-49 16 -90 37l-141 -107q-10 -9 -25 -9q-14 0 -25 11q-126 114 -165 168q-7 10 -7 23q0 12 8 23q15 21 51 66.5t54 70.5q-27 50 -41 99l-183 27q-13 2 -21 12.5t-8 23.5v222q0 12 8 23t19 13 l186 28q14 46 39 92q-40 57 -107 138q-10 12 -10 24q0 10 9 23q26 36 98.5 107.5t94.5 71.5q13 0 26 -10l138 -107q44 23 91 38q16 136 29 186q7 28 36 28h222q14 0 24.5 -8.5t11.5 -21.5l28 -184q49 -16 90 -37l142 107q9 9 24 9q13 0 25 -10q129 -119 165 -170q7 -8 7 -22 q0 -12 -8 -23q-15 -21 -51 -66.5t-54 -70.5q26 -50 41 -98l183 -28q13 -2 21 -12.5t8 -23.5z"/></svg>
<svg class="ic" style="left:1094.08px;top:271.99px" width="13.83" height="10.92" viewBox="0.0 -1408.0 1784.0 1408.0"><path fill="#4e4f52" transform="scale(1,-1)" d="M888 352l116 116l-152 152l-116 -116v-56h96v-96h56zM1328 1072q-16 16 -33 -1l-350 -350q-17 -17 -1 -33t33 1l350 350q17 17 1 33zM1408 478v-190q0 -119 -84.5 -203.5t-203.5 -84.5h-832q-119 0 -203.5 84.5t-84.5 203.5v832q0 119 84.5 203.5t203.5 84.5h832 q63 0 117 -25q15 -7 18 -23q3 -17 -9 -29l-49 -49q-14 -14 -32 -8q-23 6 -45 6h-832q-66 0 -113 -47t-47 -113v-832q0 -66 47 -113t113 -47h832q66 0 113 47t47 113v126q0 13 9 22l64 64q15 15 35 7t20 -29zM1312 1216l288 -288l-672 -672h-288v288zM1756 1084l-92 -92 l-288 288l92 92q28 28 68 28t68 -28l152 -152q28 -28 28 -68t-28 -68z"/></svg>
<svg class="ic" style="left:1123.86px;top:271.95px" width="11.19" height="12.20" viewBox="0.0 -1408.0 1408.0 1536.0"><path fill="#4e4f52" transform="scale(1,-1)" d="M512 800v-576q0 -14 -9 -23t-23 -9h-64q-14 0 -23 9t-9 23v576q0 14 9 23t23 9h64q14 0 23 -9t9 -23zM768 800v-576q0 -14 -9 -23t-23 -9h-64q-14 0 -23 9t-9 23v576q0 14 9 23t23 9h64q14 0 23 -9t9 -23zM1024 800v-576q0 -14 -9 -23t-23 -9h-64q-14 0 -23 9t-9 23v576 q0 14 9 23t23 9h64q14 0 23 -9t9 -23zM1152 76v948h-896v-948q0 -22 7 -40.5t14.5 -27t10.5 -8.5h832q3 0 10.5 8.5t14.5 27t7 40.5zM480 1152h448l-48 117q-7 9 -17 11h-317q-10 -2 -17 -11zM1408 1120v-64q0 -14 -9 -23t-23 -9h-96v-948q0 -83 -47 -143.5t-113 -60.5h-832 q-66 0 -113 58.5t-47 141.5v952h-96q-14 0 -23 9t-9 23v64q0 14 9 23t23 9h309l70 167q15 37 54 63t79 26h320q40 0 79 -26t54 -63l70 -167h309q14 0 23 -9t9 -23z"/></svg>
<svg class="ic" style="left:1122.43px;top:311.97px" width="14.13" height="11.15" viewBox="0.0 -1408.0 1784.0 1408.0"><path fill="#4e4f52" transform="scale(1,-1)" d="M888 352l116 116l-152 152l-116 -116v-56h96v-96h56zM1328 1072q-16 16 -33 -1l-350 -350q-17 -17 -1 -33t33 1l350 350q17 17 1 33zM1408 478v-190q0 -119 -84.5 -203.5t-203.5 -84.5h-832q-119 0 -203.5 84.5t-84.5 203.5v832q0 119 84.5 203.5t203.5 84.5h832 q63 0 117 -25q15 -7 18 -23q3 -17 -9 -29l-49 -49q-14 -14 -32 -8q-23 6 -45 6h-832q-66 0 -113 -47t-47 -113v-832q0 -66 47 -113t113 -47h832q66 0 113 47t47 113v126q0 13 9 22l64 64q15 15 35 7t20 -29zM1312 1216l288 -288l-672 -672h-288v288zM1756 1084l-92 -92 l-288 288l92 92q28 28 68 28t68 -28l152 -152q28 -28 28 -68t-28 -68z"/></svg>
<svg class="ic" style="left:1122.43px;top:352.47px" width="14.13" height="11.15" viewBox="0.0 -1408.0 1784.0 1408.0"><path fill="#4e4f52" transform="scale(1,-1)" d="M888 352l116 116l-152 152l-116 -116v-56h96v-96h56zM1328 1072q-16 16 -33 -1l-350 -350q-17 -17 -1 -33t33 1l350 350q17 17 1 33zM1408 478v-190q0 -119 -84.5 -203.5t-203.5 -84.5h-832q-119 0 -203.5 84.5t-84.5 203.5v832q0 119 84.5 203.5t203.5 84.5h832 q63 0 117 -25q15 -7 18 -23q3 -17 -9 -29l-49 -49q-14 -14 -32 -8q-23 6 -45 6h-832q-66 0 -113 -47t-47 -113v-832q0 -66 47 -113t113 -47h832q66 0 113 47t47 113v126q0 13 9 22l64 64q15 15 35 7t20 -29zM1312 1216l288 -288l-672 -672h-288v288zM1756 1084l-92 -92 l-288 288l92 92q28 28 68 28t68 -28l152 -152q28 -28 28 -68t-28 -68z"/></svg>
<svg class="ic" style="left:1122.43px;top:413.97px" width="14.13" height="11.15" viewBox="0.0 -1408.0 1784.0 1408.0"><path fill="#4e4f52" transform="scale(1,-1)" d="M888 352l116 116l-152 152l-116 -116v-56h96v-96h56zM1328 1072q-16 16 -33 -1l-350 -350q-17 -17 -1 -33t33 1l350 350q17 17 1 33zM1408 478v-190q0 -119 -84.5 -203.5t-203.5 -84.5h-832q-119 0 -203.5 84.5t-84.5 203.5v832q0 119 84.5 203.5t203.5 84.5h832 q63 0 117 -25q15 -7 18 -23q3 -17 -9 -29l-49 -49q-14 -14 -32 -8q-23 6 -45 6h-832q-66 0 -113 -47t-47 -113v-832q0 -66 47 -113t113 -47h832q66 0 113 47t47 113v126q0 13 9 22l64 64q15 15 35 7t20 -29zM1312 1216l288 -288l-672 -672h-288v288zM1756 1084l-92 -92 l-288 288l92 92q28 28 68 28t68 -28l152 -152q28 -28 28 -68t-28 -68z"/></svg>
<svg class="ic" style="left:1122.43px;top:474.97px" width="14.13" height="11.15" viewBox="0.0 -1408.0 1784.0 1408.0"><path fill="#4e4f52" transform="scale(1,-1)" d="M888 352l116 116l-152 152l-116 -116v-56h96v-96h56zM1328 1072q-16 16 -33 -1l-350 -350q-17 -17 -1 -33t33 1l350 350q17 17 1 33zM1408 478v-190q0 -119 -84.5 -203.5t-203.5 -84.5h-832q-119 0 -203.5 84.5t-84.5 203.5v832q0 119 84.5 203.5t203.5 84.5h832 q63 0 117 -25q15 -7 18 -23q3 -17 -9 -29l-49 -49q-14 -14 -32 -8q-23 6 -45 6h-832q-66 0 -113 -47t-47 -113v-832q0 -66 47 -113t113 -47h832q66 0 113 47t47 113v126q0 13 9 22l64 64q15 15 35 7t20 -29zM1312 1216l288 -288l-672 -672h-288v288zM1756 1084l-92 -92 l-288 288l92 92q28 28 68 28t68 -28l152 -152q28 -28 28 -68t-28 -68z"/></svg>
<svg class="ic" style="left:151.2px;top:232.2px" width="5.8" height="10.2" viewBox="0 0 5.8 10.2"><path fill="#36598b" d="M2 0h1.8v6.6h2L2.9 10.2 0 6.6h2z"/></svg>
</main>
</div>
</body></html>
